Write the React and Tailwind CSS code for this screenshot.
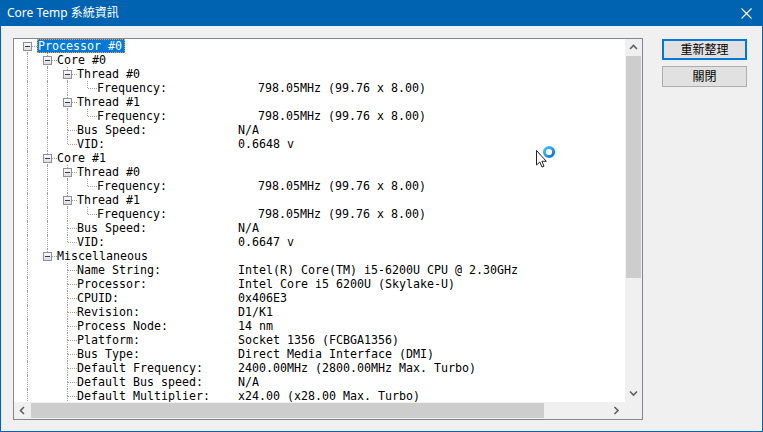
import React from "react"

const mono = { fontFamily: '"DejaVu Sans Mono", "Liberation Mono", monospace' }

const freq = "798.05MHz (99.76 x 8.00)"

const coreRows = (n, vid) => [
  { d: 1, t: `Core #${n}`, kids: true, next: true },
  { d: 2, t: "Thread #0", kids: true, next: true },
  { d: 3, l: "Frequency:", v: freq, next: false },
  { d: 2, t: "Thread #1", kids: true, next: true },
  { d: 3, l: "Frequency:", v: freq, next: false },
  { d: 2, l: "Bus Speed:", v: "N/A", next: true },
  { d: 2, l: "VID:", v: vid, next: false },
]

const misc = [
  ["Name String:", "Intel(R) Core(TM) i5-6200U CPU @ 2.30GHz"],
  ["Processor:", "Intel Core i5 6200U (Skylake-U)"],
  ["CPUID:", "0x406E3"],
  ["Revision:", "D1/K1"],
  ["Process Node:", "14 nm"],
  ["Platform:", "Socket 1356 (FCBGA1356)"],
  ["Bus Type:", "Direct Media Interface (DMI)"],
  ["Default Frequency:", "2400.00MHz (2800.00MHz Max. Turbo)"],
  ["Default Bus speed:", "N/A"],
  ["Default Multiplier:", "x24.00 (x28.00 Max. Turbo)"],
]

const rows = [
  { d: 0, t: "Processor #0", kids: true, next: true, sel: true, first: true },
  ...coreRows(0, "0.6648 v"),
  ...coreRows(1, "0.6647 v"),
  { d: 1, t: "Miscellaneous", kids: true, next: false },
  ...misc.map(([l, v]) => ({ d: 2, l, v, next: true })),
]

// which levels still have siblings coming, per row
const withGuides = (() => {
  const cont = []
  return rows.map((r) => {
    const guides = cont.slice(0, r.d)
    cont[r.d] = r.next
    cont.length = r.d + 1
    return { ...r, guides }
  })
})()

const Dots = "border-dotted border-[#a0a0a0]"

function Connector({ row }) {
  return (
    <div className="relative w-[20px] h-[14px] shrink-0">
      {!row.first && <div className={`absolute left-[10px] top-0 h-[7px] border-l ${Dots}`} />}
      {row.next && <div className={`absolute left-[10px] top-[7px] bottom-0 border-l ${Dots}`} />}
      <div className={`absolute left-[11px] right-0 top-[7px] border-t ${Dots}`} />
      {row.kids && (
        <div className="absolute left-[6px] top-[3px] w-[9px] h-[9px] border border-[#919191] bg-gradient-to-b from-[#fafafa] to-[#dcdcdc]">
          <div className="absolute left-[1px] top-[3px] w-[5px] h-px bg-[#2a3a66]" />
        </div>
      )}
    </div>
  )
}

function Row({ row }) {
  return (
    <div className="flex h-[14px] items-center">
      {row.guides.map((g, i) => (
        <div key={i} className="relative w-[20px] h-[14px] shrink-0">
          {g && <div className={`absolute left-[10px] top-0 bottom-0 border-l ${Dots}`} />}
        </div>
      ))}
      <Connector row={row} />
      {row.sel ? (
        <span className="h-[14px] pr-[2px] bg-[#0078d7] text-white border border-dotted border-[#e8a04a] leading-[12px] whitespace-pre">
          {row.t}
        </span>
      ) : (
        <span className="whitespace-pre leading-[14px] text-black">
          {row.t ?? row.l.padEnd(23) + row.v}
        </span>
      )}
    </div>
  )
}

function Chevron({ dir }) {
  const d = {
    up: "M1 5 L4.5 1.5 L8 5",
    down: "M1 1.5 L4.5 5 L8 1.5",
    left: "M5 1 L1.5 4.5 L5 8",
    right: "M1.5 1 L5 4.5 L1.5 8",
  }[dir]
  const vert = dir === "up" || dir === "down"
  return (
    <svg width={vert ? 9 : 7} height={vert ? 7 : 9} viewBox={vert ? "0 0 9 7" : "0 0 7 9"}>
      <path d={d} fill="none" stroke="#606060" strokeWidth="1.6" />
    </svg>
  )
}

export default function App() {
  return (
    <div
      className="w-[763px] h-[432px] flex flex-col bg-[#0063b1] overflow-hidden"
      style={{ fontFamily: '"Noto Sans", "Noto Sans CJK TC", sans-serif' }}
    >
      {/* Title bar */}
      <div className="h-[26px] flex items-center justify-between pl-[7px] pr-[11px] text-white text-[12px]">
        <span>Core Temp 系統資訊</span>
        <svg width="11" height="11" viewBox="0 0 11 11">
          <path d="M0.5 0.5 L10.5 10.5 M10.5 0.5 L0.5 10.5" stroke="white" strokeWidth="1.1" />
        </svg>
      </div>

      {/* Body */}
      <div className="flex-1 mx-px mb-px bg-[#f0f0f0] flex pt-[12px] pl-[12px]">
        {/* Tree view */}
        <div className="relative w-[630px] h-[382px] border border-[#828790] bg-white grid grid-cols-[611px_17px] grid-rows-[363px_17px]">
          <div className="overflow-hidden pl-[3px] text-[11.63px]" style={mono}>
            {withGuides.map((r, i) => (
              <Row key={i} row={r} />
            ))}
          </div>

          {/* vertical scrollbar */}
          <div className="bg-[#f0f0f0] flex flex-col">
            <div className="h-[17px] flex items-center justify-center">
              <Chevron dir="up" />
            </div>
            <div className="flex-1 flex flex-col px-px">
              <div className="h-[222px] bg-[#cdcdcd]" />
            </div>
            <div className="h-[17px] flex items-center justify-center">
              <Chevron dir="down" />
            </div>
          </div>

          {/* horizontal scrollbar */}
          <div className="bg-[#f0f0f0] flex">
            <div className="w-[17px] flex items-center justify-center">
              <Chevron dir="left" />
            </div>
            <div className="flex-1 flex py-px">
              <div className="w-[513px] bg-[#cdcdcd]" />
            </div>
            <div className="w-[17px] flex items-center justify-center">
              <Chevron dir="right" />
            </div>
          </div>
          <div className="bg-[#f0f0f0]" />

          {/* mouse cursor with busy ring */}
          <svg className="absolute left-[521px] top-[103px]" width="30" height="30" viewBox="0 0 30 30">
            <defs>
              <linearGradient id="ring" x1="0" y1="0" x2="1" y2="1">
                <stop offset="0" stopColor="#4cc2ff" />
                <stop offset="1" stopColor="#0a6fd8" />
              </linearGradient>
            </defs>
            <circle cx="14" cy="10" r="4.6" fill="none" stroke="url(#ring)" strokeWidth="3" />
            <path d="M1.5 8.5 L1.5 23 L4.8 20 L7 25 L9 24.2 L6.9 19.3 L11.3 19.3 Z" fill="white" stroke="#222" strokeWidth="1" strokeLinejoin="round" />
          </svg>
        </div>

        {/* Buttons */}
        <div className="ml-[19px] pt-px flex flex-col gap-[6px] text-[12px] text-black">
          <button className="w-[85px] h-[21px] border-2 border-[#0078d7] bg-[#e1e1e1] flex items-center justify-center leading-none">
            重新整理
          </button>
          <button className="w-[85px] h-[21px] border border-[#adadad] bg-[#e1e1e1] flex items-center justify-center leading-none">
            關閉
          </button>
        </div>
      </div>
    </div>
  )
}
